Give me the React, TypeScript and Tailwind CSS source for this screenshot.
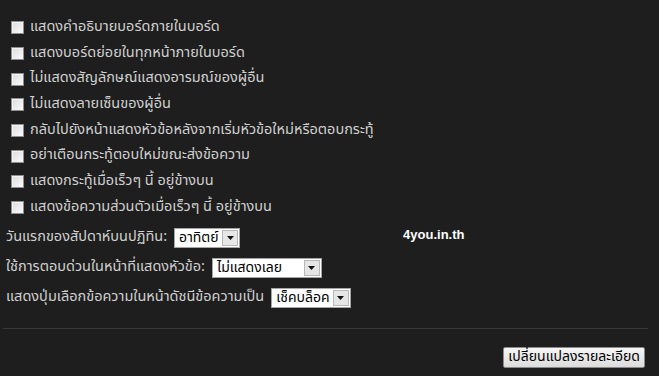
const checks = [
  "แสดงคำอธิบายบอร์ดภายในบอร์ด",
  "แสดงบอร์ดย่อยในทุกหน้าภายในบอร์ด",
  "ไม่แสดงสัญลักษณ์แสดงอารมณ์ของผู้อื่น",
  "ไม่แสดงลายเซ็นของผู้อื่น",
  "กลับไปยังหน้าแสดงหัวข้อหลังจากเริ่มหัวข้อใหม่หรือตอบกระทู้",
  "อย่าเตือนกระทู้ตอบใหม่ขณะส่งข้อความ",
  "แสดงกระทู้เมื่อเร็วๆ นี้ อยู่ข้างบน",
  "แสดงข้อความส่วนตัวเมื่อเร็วๆ นี้ อยู่ข้างบน",
];

function Box() {
  return (
    <span className="w-[13px] h-[13px] shrink-0 border border-[#8f8f8f] bg-gradient-to-br from-[#dcdcdc] to-[#fbfbfb] shadow-[inset_1px_1px_0_#f4f4f4]" />
  );
}

function FakeSelect({ value, w }: { value: string; w: string }) {
  return (
    <span className={`inline-flex items-center h-[20px] border border-[#a5a5a5] bg-white ${w}`}>
      <span className="flex-1 pl-[4px] pr-[3px] text-black text-[14px] leading-none whitespace-nowrap">{value}</span>
      <span className="w-[16px] h-[16px] mr-[1px] shrink-0 flex items-center justify-center bg-[#e6e6e6] border border-[#b8b8b8]">
        <svg width="7" height="4" viewBox="0 0 7 4"><path d="M0 0h7L3.5 4z" fill="#111" /></svg>
      </span>
    </span>
  );
}

export default function App() {
  return (
    <div className="w-[659px] h-[376px] bg-[#1e1e1e] text-[#d0d0d0] text-[14.5px] overflow-hidden"
      style={{ fontFamily: "Tahoma, 'Noto Sans Thai', 'Noto Sans', sans-serif" }}>
      <div className="pt-[15px] pl-[11px] flex flex-col">
        {checks.map((c) => (
          <label key={c} className="flex items-center gap-[6px] h-[25.7px]">
            <Box />
            <span className="whitespace-nowrap">{c}</span>
          </label>
        ))}
      </div>

      <div className="pl-[6px] mt-[7px] flex flex-col gap-[10px]">
        <div className="flex items-center gap-[7px] h-[20px]">
          <span className="whitespace-nowrap">วันแรกของสัปดาห์บนปฏิทิน:</span>
          <FakeSelect value="อาทิตย์" w="min-w-[66px]" />
          <span className="ml-[156px] -mt-[6px] text-white font-bold text-[13px]" style={{ fontFamily: "'Liberation Sans', Arial, sans-serif" }}>4you.in.th</span>
        </div>
        <div className="flex items-center gap-[7px] h-[20px]">
          <span className="whitespace-nowrap">ใช้การตอบด่วนในหน้าที่แสดงหัวข้อ:</span>
          <FakeSelect value="ไม่แสดงเลย" w="w-[110px]" />
        </div>
        <div className="flex items-center gap-[7px] h-[20px]">
          <span className="whitespace-nowrap">แสดงปุ่มเลือกข้อความในหน้าดัชนีข้อความเป็น</span>
          <FakeSelect value="เช็คบล็อค" w="min-w-[79px]" />
        </div>
      </div>

      <div className="mt-[20px] ml-[3px] mr-[11px] h-px bg-[#3a3a3a]" />

      <div className="flex justify-end pr-[14px] mt-[18px]">
        <button className="h-[21px] px-[4px] rounded-[2px] border border-[#8a8a8a] bg-gradient-to-b from-[#f6f6f6] to-[#dcdcdc] text-black text-[14px] leading-none">
          เปลี่ยนแปลงรายละเอียด
        </button>
      </div>
    </div>
  );
}
